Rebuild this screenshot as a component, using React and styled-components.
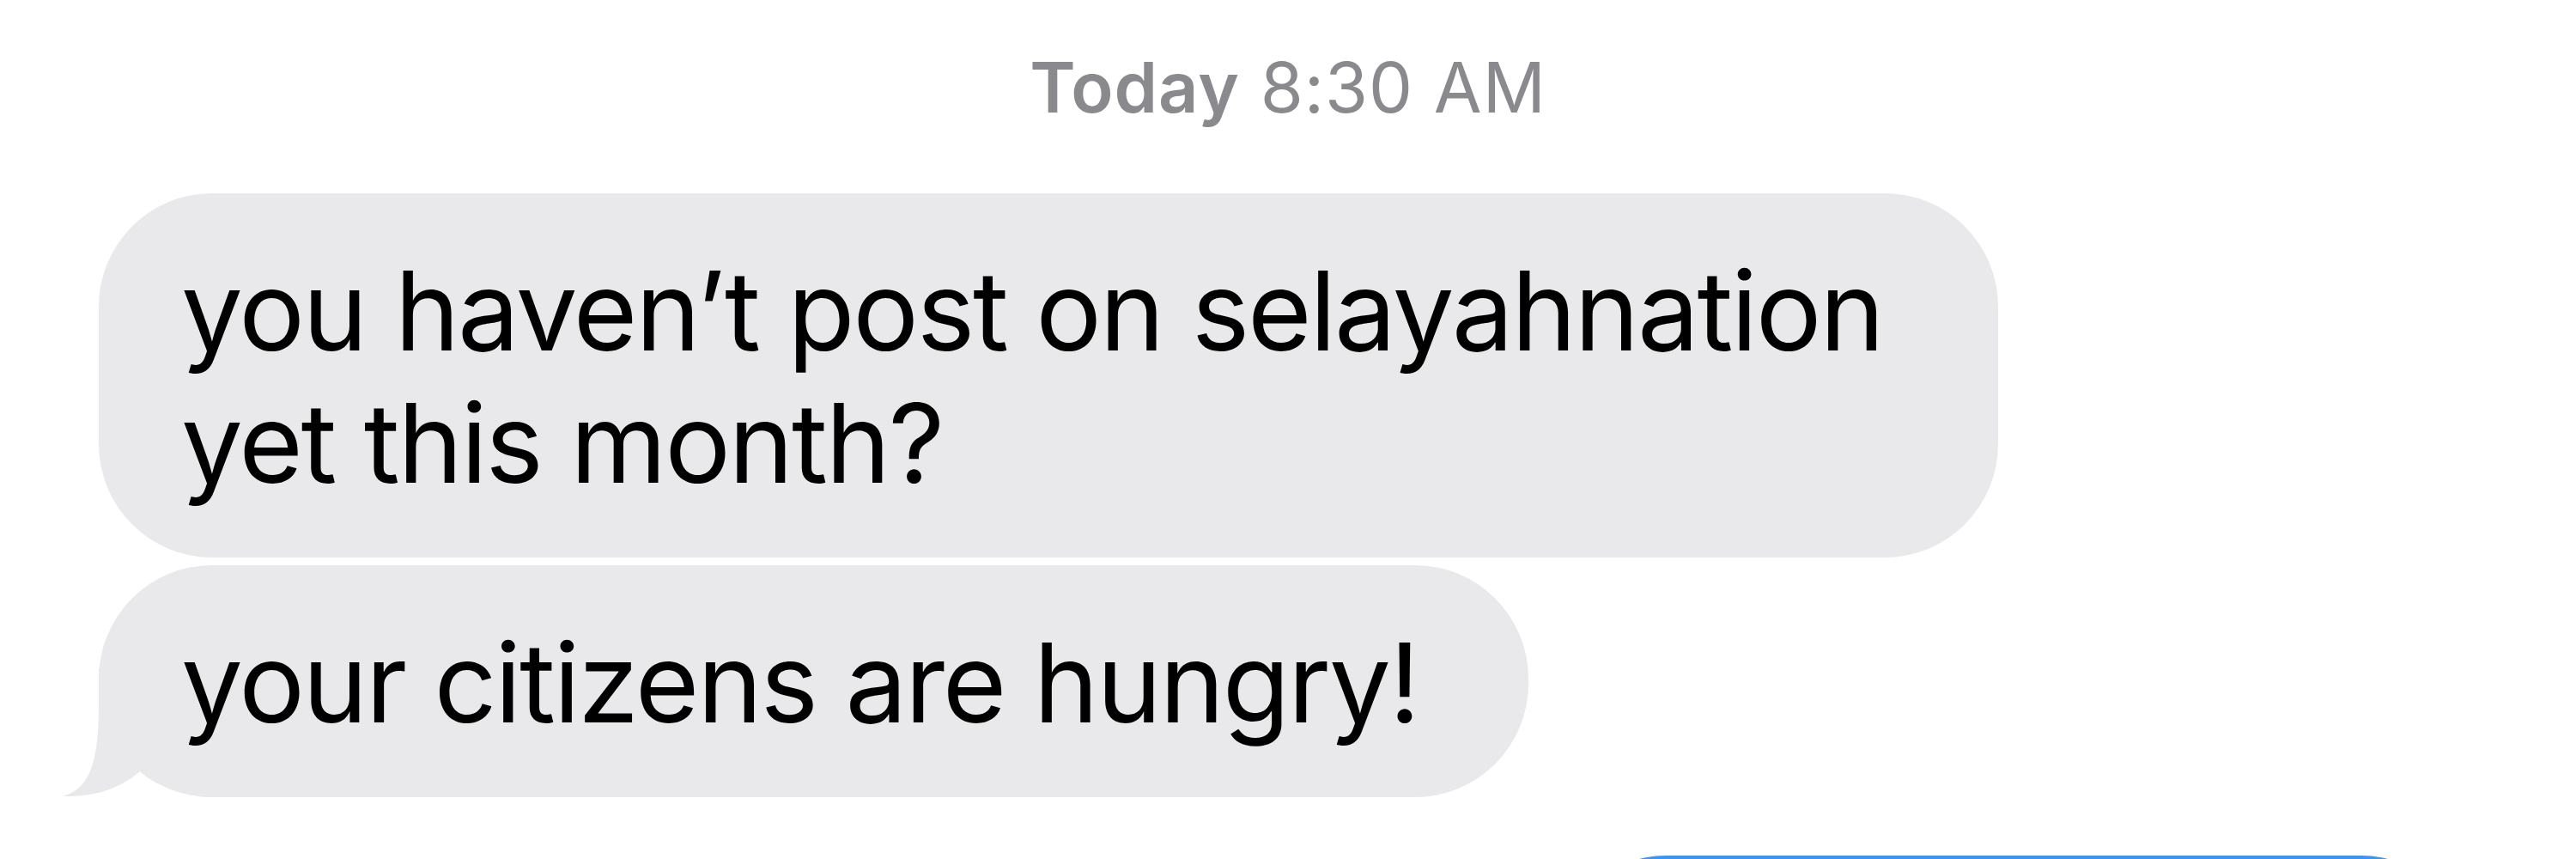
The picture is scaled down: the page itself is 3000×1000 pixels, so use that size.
import React from "react";
import styled, { createGlobalStyle } from "styled-components";

const Global = createGlobalStyle`
  html, body {
    margin: 0;
    padding: 0;
    background: #ffffff;
  }
  * { box-sizing: border-box; }
`;

const Screen = styled.div`
  width: 3000px;
  height: 1000px;
  overflow: hidden;
  background: #ffffff;
  display: flex;
  flex-direction: column;
  font-family: Inter, "Noto Sans", "Liberation Sans", sans-serif;
`;

const Stamp = styled.div`
  padding-top: 52px;
  height: 152px;
  text-align: center;
  font-size: 81px;
  line-height: 100px;
  color: #8a8a8e;
  letter-spacing: 0.012em;
`;

const StampDay = styled.span`
  font-weight: 600;
`;

const StampTime = styled.span`
  font-weight: 400;
`;

const Thread = styled.div`
  margin-top: 73px;
  padding: 0 130px 0 115px;
  display: flex;
  flex-direction: column;
  gap: ${(p) => p.$gap}px;
`;

const Group = styled.div`
  display: flex;
  flex-direction: column;
  align-items: flex-start;
  gap: 9px;
`;

const Bubble = styled.div`
  position: relative;
  isolation: isolate;
  max-width: 2212px;
  padding: 60px 128px 56px 96px;
  border-radius: 132px;
  background: #e9e9eb;
  color: #000000;
  font-size: 128px;
  line-height: 154px;
  letter-spacing: -0.018em;
`;

const SentBubble = styled.div`
  align-self: flex-end;
  width: 1050px;
  height: 240px;
  border-radius: 132px;
  background: linear-gradient(180deg, #3a95f7 0%, #1f86f5 100%);
`;

const Tail = styled.svg`
  position: absolute;
  z-index: -1;
  left: -45px;
  bottom: 0;
  width: 180px;
  height: 150px;
  display: block;
`;

export default function App() {
  return (
    <>
      <Global />
      <Screen>
        <Stamp>
          <StampDay>Today</StampDay> <StampTime>8:30 AM</StampTime>
        </Stamp>
        <Thread $gap={68}>
          <Group>
            <Bubble>you haven’t post on selayahnation yet this month?</Bubble>
            <Bubble>
              your citizens are hungry!
              <Tail viewBox="0 0 180 150" aria-hidden="true">
                <path
                  d="M45 0 L45 40 C45 110 35 140 3 149 C40 150 70 140 93 120 C115 140 150 150 180 150 L180 0 Z"
                  fill="#e9e9eb"
                />
              </Tail>
            </Bubble>
          </Group>
          <SentBubble />
        </Thread>
      </Screen>
    </>
  );
}
